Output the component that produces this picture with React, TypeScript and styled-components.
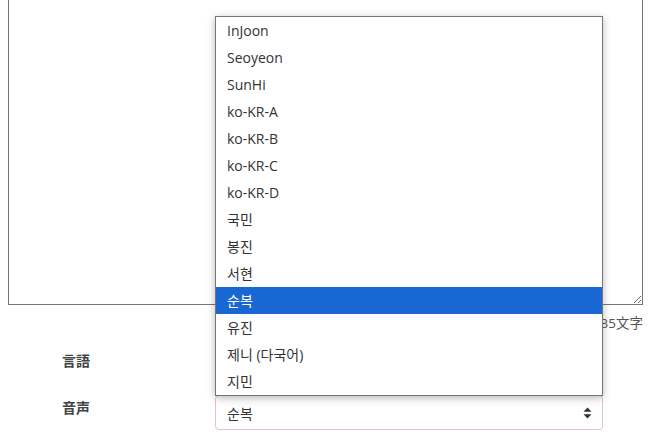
import React, { useState } from "react";
import styled, { createGlobalStyle } from "styled-components";

const GlobalStyle = createGlobalStyle`
  html, body {
    margin: 0;
    background: #fff;
    overflow: hidden;
  }
  body {
    padding: 0 8px;
    font-family: "Open Sans", "Noto Sans CJK JP", sans-serif;
    color: #333;
  }
`;

const voices = [
  "InJoon",
  "Seoyeon",
  "SunHi",
  "ko-KR-A",
  "ko-KR-B",
  "ko-KR-C",
  "ko-KR-D",
  "국민",
  "봉진",
  "서현",
  "순복",
  "유진",
  "제니 (다국어)",
  "지민",
];

const Page = styled.div`
  width: 635px;
`;

const TextBox = styled.textarea`
  display: block;
  box-sizing: border-box;
  width: 635px;
  height: 330px;
  margin-top: -25px;
  border: 1px solid #767676;
  border-radius: 0;
  padding: 6px;
  font-family: "Open Sans", sans-serif;
  font-size: 14px;
  outline: none;
`;

const Counter = styled.div`
  margin-top: 8px;
  height: 20px;
  line-height: 20px;
  text-align: right;
  font-size: 13.5px;
  color: #555;
  font-family: "Open Sans", "Noto Sans CJK JP", sans-serif;
`;

const Form = styled.div`
  display: flex;
  flex-direction: column;
  gap: 12px;
  margin-top: 15px;
`;

const Row = styled.div`
  display: grid;
  grid-template-columns: 207px 388px;
  align-items: start;
`;

const Label = styled.div`
  padding-left: 54px;
  padding-top: 2px;
  line-height: 20px;
  font-size: 14px;
  font-weight: 700;
  color: #444;
  font-family: "Noto Sans CJK JP", sans-serif;
`;

const Select = styled.div<{ $focused?: boolean }>`
  position: relative;
  box-sizing: border-box;
  height: 35px;
  display: flex;
  align-items: center;
  justify-content: space-between;
  padding: 0 10px 0 11px;
  border: 1px solid ${(p) => (p.$focused ? "#e3c3cc" : "#ccc")};
  border-radius: 4px;
  background: #fff;
  font-size: 14px;
  color: #333;
  font-family: "Open Sans", "Noto Sans CJK KR", sans-serif;
`;

const Listbox = styled.ul`
  position: absolute;
  left: -1px;
  right: -1px;
  bottom: 100%;
  margin: 0;
  padding: 0;
  list-style: none;
  background: #fff;
  border: 1px solid #767676;
  box-shadow: 0 2px 8px rgba(0, 0, 0, 0.28);
  z-index: 10;
`;

const Option = styled.li<{ $selected?: boolean }>`
  height: 27px;
  line-height: 27px;
  padding-left: 11px;
  font-size: 14px;
  color: ${(p) => (p.$selected ? "#fff" : "#333")};
  background: ${(p) => (p.$selected ? "#1967d2" : "transparent")};
  font-family: "Open Sans", "Noto Sans CJK KR", sans-serif;
`;

function Arrows() {
  return (
    <svg width="9" height="12" viewBox="0 0 9 12" aria-hidden="true">
      <path d="M4.5 0.5 L8.5 4.8 H0.5 Z" fill="#333" />
      <path d="M4.5 11.5 L8.5 7.2 H0.5 Z" fill="#333" />
    </svg>
  );
}

export default function App() {
  const [voice, setVoice] = useState("순복");

  return (
    <Page>
      <GlobalStyle />
      <TextBox defaultValue="" />
      <Counter>135文字</Counter>
      <Form>
        <Row>
          <Label>言語</Label>
          <Select>
            <span />
            <Arrows />
          </Select>
        </Row>
        <Row>
          <Label>音声</Label>
          <Select $focused>
            <span>{voice}</span>
            <Arrows />
            <Listbox role="listbox">
              {voices.map((v) => (
                <Option
                  key={v}
                  role="option"
                  $selected={v === voice}
                  onClick={() => setVoice(v)}
                >
                  {v}
                </Option>
              ))}
            </Listbox>
          </Select>
        </Row>
      </Form>
    </Page>
  );
}
